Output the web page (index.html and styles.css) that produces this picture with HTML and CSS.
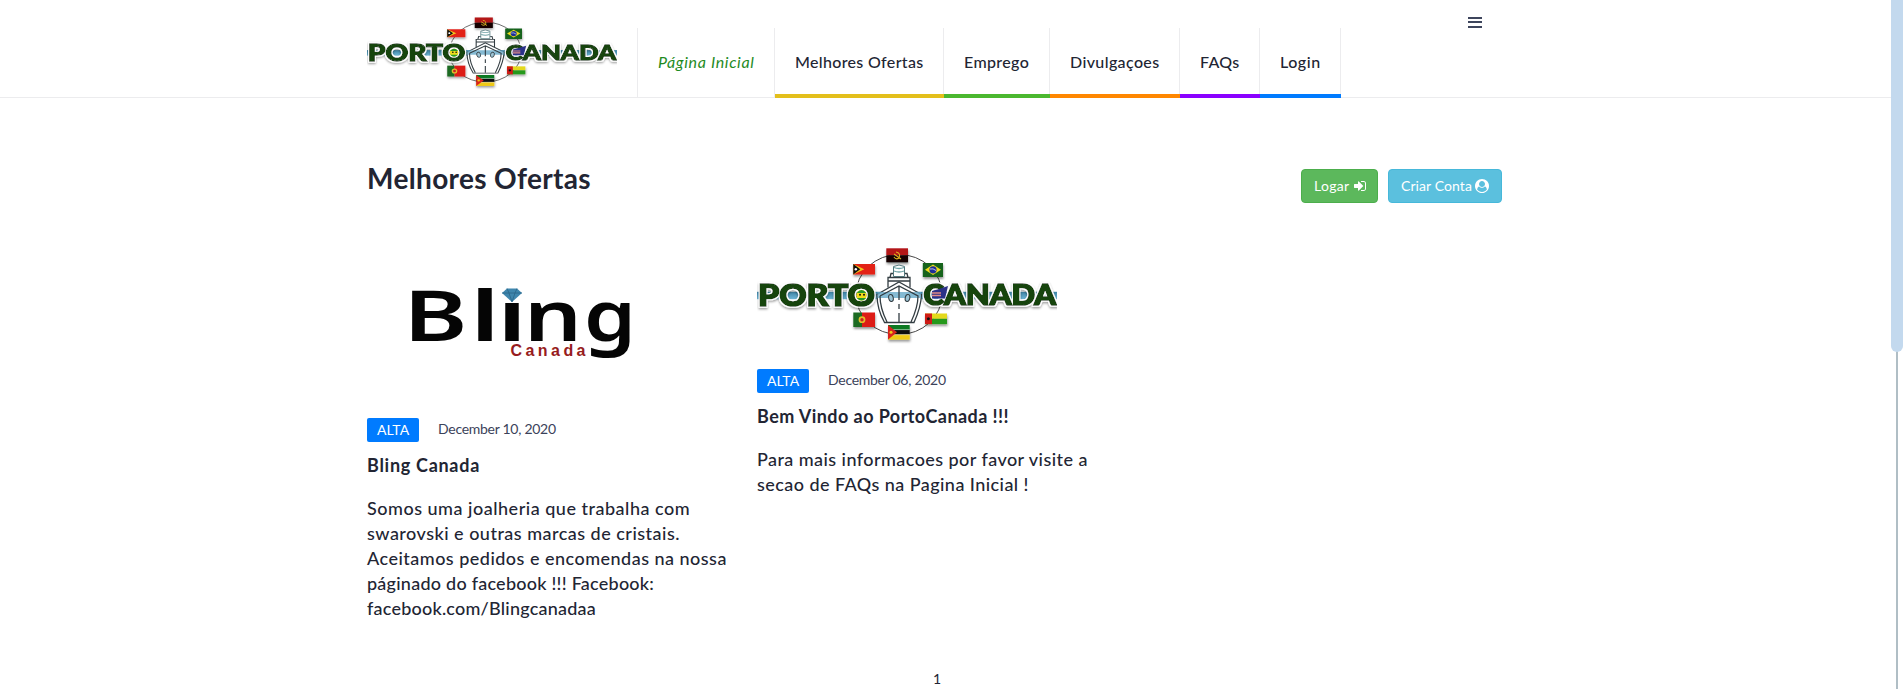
FILE: index.html
```
<!DOCTYPE html>
<html lang="pt">
<head>
<meta charset="utf-8">
<title>PortoCanada</title>
<link rel="stylesheet" href="styles.css">
</head>
<body>
<svg class="defs" width="0" height="0" aria-hidden="true">
  <defs>
    <linearGradient id="sea" x1="0" y1="0" x2="0" y2="1"><stop offset="0" stop-color="#3d84a6"/><stop offset="1" stop-color="#6fb6d6"/></linearGradient>
    <filter id="shade" x="-20%" y="-20%" width="150%" height="160%"><feDropShadow dx="0.5" dy="2" stdDeviation="1.3" flood-color="#000" flood-opacity="0.4"/></filter>
    <filter id="halo" x="-20%" y="-20%" width="150%" height="160%">
      <feMorphology in="SourceAlpha" operator="dilate" radius="1" result="fat"/>
      <feFlood flood-color="#fff"/><feComposite in2="fat" operator="in" result="edge"/>
      <feMerge result="word"><feMergeNode in="edge"/><feMergeNode in="SourceGraphic"/></feMerge>
      <feDropShadow in="word" dx="0" dy="1.500" stdDeviation="1.200" flood-color="#000" flood-opacity="0.400"/>
    </filter>
  </defs>
  <symbol id="porto-logo" viewBox="0 0 300 100" preserveAspectRatio="none">
    <rect x="0" y="46.8" width="300" height="7.4" fill="url(#sea)"/>
    <ellipse cx="142" cy="49.5" rx="43" ry="40" fill="none" stroke="#333" stroke-width="0.9"/>
    <g filter="url(#shade)">
      <g><path d="M129.3 3.3h21.7v7h-21.7z" fill="#b31217"/><path d="M129.3 10.3h21.7v7h-21.7z" fill="#120506"/><path d="M139 7q5 1 3 6q-3 2-5-1M137 9l7 5" fill="none" stroke="#e0b020" stroke-width="1.1"/></g>
      <g><path d="M96.3 19h21.7v10.500h-21.700z" fill="#e32119"/><path d="M96.300 19l11 5.200l-11 5.300z" fill="#f2c21b"/><path d="M96.300 19l7 5.200l-7 5.300z" fill="#111"/><circle cx="98.800" cy="24.200" r="1.200" fill="#fff"/></g>
      <g><path d="M165.800 18h20.200v14h-20.200z" fill="#17631f"/><path d="M176 19.500l8 5.300l-8 5.300l-8-5.300z" fill="#efdc1c"/><circle cx="176" cy="24.800" r="3.600" fill="#1d2f98"/><path d="M173 24q3-1 6 1.500" stroke="#fff" stroke-width="0.7" fill="none"/></g>
      <g><path d="M96.300 67.500h8.700v14.500h-8.700z" fill="#1b6a20"/><path d="M105 67.500h13v14.500h-13z" fill="#dd1a16"/><circle cx="105" cy="74.700" r="3.400" fill="#e3bd2a"/><circle cx="105" cy="74.700" r="1.700" fill="#c92020"/></g>
      <g><path d="M168 68.500h22v5.300h-22z" fill="#e4d91c"/><path d="M168 73.800h22v5.300h-22z" fill="#28991f"/><path d="M168 68.500h7v10.600h-7z" fill="#cf1a17"/><circle cx="171.400" cy="73.800" r="1.500" fill="#111"/></g>
      <g><path d="M131 80h21.700v5h-21.700z" fill="#0c7a24"/><path d="M131 85h21.700v4.600h-21.700z" fill="#111"/><path d="M131 89.600h21.700v5h-21.700z" fill="#efc916"/><path d="M131 84.600h21.700M131 89.700h21.700" stroke="#fff" stroke-width="0.500"/><path d="M131 80l9 7.300l-9 7.300z" fill="#d9231c"/><circle cx="134" cy="87.300" r="1.500" fill="#efc916"/></g>
    </g>
    <path d="M120 49.500L142 37l22.500 12.500Q164 62 157 77.500h-29.500Q120 64 120 49.500z" fill="#fff" stroke="#333d42" stroke-width="1.300"/>
    <path d="M120.500 47h43.500v6h-43.500z" fill="#66a9c8" opacity="0.800"/>
    <path d="M123 51L142 41l19 10Q161 62 154 77M123 51Q123 63 130 77M142 41v14M142 59v5M142 68v9M131 42.500v-10h22v10M133 32.500l1-4h16l1 4M131 36h22" fill="none" stroke="#333d42" stroke-width="1.300"/>
    <path d="M136.500 21.500q5.500-3 11 0v10h-11z" fill="#fff" stroke="#52777c" stroke-width="1"/>
    <path d="M137 22.500q5 2 10 0M137 26q5 2 10 0" fill="none" stroke="#6fa3a6" stroke-width="1.300"/>
    <ellipse cx="134" cy="53" rx="2.300" ry="3.500" fill="#9cc4d6" stroke="#333d42" transform="rotate(-12 134 53)"/><ellipse cx="150.500" cy="53" rx="2.300" ry="3.500" fill="#9cc4d6" stroke="#333d42" transform="rotate(12 150.500 53)"/>
    <g class="logo-word" filter="url(#halo)">
      <text x="1" y="61" font-size="30" textLength="117" lengthAdjust="spacingAndGlyphs">PORTO</text>
      <text x="166.500" y="60" font-size="28.500" textLength="132.500" lengthAdjust="spacingAndGlyphs">CANADA</text>
    </g>
    <circle cx="104.500" cy="50.200" r="5.200" fill="#efdc1c"/><path d="M99.800 48q4.700-6 9.400 0z" fill="#269a2b"/><path d="M99.800 53q4.700 5 9.400 0z" fill="#269a2b"/><circle cx="103" cy="49.800" r="1" fill="#111"/><circle cx="107" cy="49.800" r="1" fill="#111"/>
    <path d="M175 46l7-2l9-3l-3 12.500h-13z" fill="#2b3188"/><path d="M175 48h9M175 50.500h9" stroke="#e08a86" stroke-width="1.500"/>
  </symbol>
</svg>

<header class="header">
  <div class="container header-row">
    <a class="brand"><svg width="250" height="75" preserveAspectRatio="none" viewBox="0 0 300 100"><use href="#porto-logo" width="300" height="100"/></svg></a>
    <nav class="nav">
      <a class="nav-item home">Página Inicial</a>
      <a class="nav-item gold">Melhores Ofertas</a>
      <a class="nav-item green">Emprego</a>
      <a class="nav-item orange">Divulgaçoes</a>
      <a class="nav-item purple">FAQs</a>
      <a class="nav-item blue">Login</a>
    </nav>
    <button class="burger" aria-label="Menu"><svg width="14" height="11"><path d="M0 0h14v2H0zM0 4h14v2H0zM0 9h14v2H0z" fill="#3d455c"/></svg></button>
  </div>
</header>

<main class="container">
  <div class="title-row">
    <h2 class="title">Melhores Ofertas</h2>
    <div class="actions">
      <a class="btn success"><span class="logar">Logar</span><svg width="14" height="14" viewBox="0 0 1792 1792"><path fill="#fff" d="M1312 896q0 26-19 45l-544 544q-19 19-45 19t-45-19-19-45v-288h-448q-26 0-45-19t-19-45v-384q0-26 19-45t45-19h448v-288q0-26 19-45t45-19 45 19l544 544q19 19 19 45zm352-352v704q0 119-84.500 203.500t-203.500 84.500h-320q-13 0-22.500-9.500t-9.500-22.500q0-4-1-20t-.5-26.500 3-23.500 10-19.500 20.500-6.500h320q66 0 113-47t47-113v-704q0-66-47-113t-113-47h-312l-11.500-1-11.500-3-8-5.500-7-9-2-13.500q0-4-1-20t-.5-26.500 3-23.500 10-19.500 20.500-6.500h320q119 0 203.500 84.500t84.500 203.500z"/></svg></a>
      <a class="btn info"><span class="criar">Criar Conta</span><svg width="14" height="14" viewBox="0 0 1792 1792"><path fill="#fff" fill-rule="evenodd" d="M1523 1339q-22-155-87.500-257.500t-184.500-118.500q-67 74-159.500 115.500t-195.500 41.500-195.500-41.500-159.500-115.500q-119 16-184.500 118.500t-87.500 257.500q106 150 271 237.500t356 87.500 356-87.500 271-237.500zm-243-699q0-159-112.500-271.500t-271.500-112.500-271.500 112.500-112.500 271.500 112.500 271.500 271.500 112.500 271.500-112.500 112.500-271.500zm512 256q0 182-71 347.500t-190.500 286-285.500 191.500-349 71q-182 0-348-71t-286-191-191-286-71-348 71-348 191-286 286-191 348-71 348 71 286 191 191 286 71 348z"/></svg></a>
    </div>
  </div>

  <div class="grid">
    <article class="card">
      <svg class="picture" width="300" height="149" viewBox="0 0 300 149">
        <g class="bling">
          <text x="36.500" y="94" textLength="64" lengthAdjust="spacingAndGlyphs">B</text>
          <text x="103" y="94" textLength="30" lengthAdjust="spacingAndGlyphs">l</text>
          <text x="130" y="94" textLength="30" lengthAdjust="spacingAndGlyphs">i</text>
          <text x="157" y="94" textLength="58" lengthAdjust="spacingAndGlyphs">n</text>
          <text x="217" y="94" textLength="52" lengthAdjust="spacingAndGlyphs">g</text>
        </g>
        <rect x="133" y="36" width="26" height="20" fill="#fff"/>
        <path d="M135 46l5-4.500h10l5 4.500l-10 9z" fill="#3f86ad"/><path d="M135 46h20M140 41.500l2 4.500l3 9l3-9l2-4.500" stroke="#2b6688" stroke-width="0.800" fill="none"/>
        <text class="bling-sub" x="143.500" y="108.500" textLength="75">Canada</text>
      </svg>
      <div class="meta"><span class="badge">ALTA</span><span class="date">December 10, 2020</span></div>
      <h3 class="card-title t1">Bling Canada</h3>
      <p class="text"><span class="l1">Somos uma joalheria que trabalha com</span><br><span class="l2">swarovski e outras marcas de cristais.</span><br><span class="l3">Aceitamos pedidos e encomendas na nossa</span><br><span class="l4">páginado do facebook !!! Facebook:</span><br><span class="l5">facebook.com/Blingcanadaa</span></p>
    </article>
    <article class="card">
      <svg class="picture" width="300" height="100"><use href="#porto-logo" width="300" height="100"/></svg>
      <div class="meta"><span class="badge">ALTA</span><span class="date">December 06, 2020</span></div>
      <h3 class="card-title t2">Bem Vindo ao PortoCanada !!!</h3>
      <p class="text"><span class="l6">Para mais informacoes por favor visite a</span><br><span class="l7">secao de FAQs na Pagina Inicial !</span></p>
    </article>
  </div>
  <div class="pager">1</div>
</main>
<div class="rail"><div class="thumb"></div></div>
</body>
</html>
```
FILE: styles.css
```
* { box-sizing: border-box; }
html, body { height: 100%; overflow: hidden; }
body { margin: 0; background: #fff; color: #222533; font-family: Lato, "Open Sans", sans-serif; font-size: 16px; }
.defs { position: absolute; }
.container { width: 1170px; margin-left: 352px; padding: 0 15px; }

.header { height: 98px; border-bottom: 1px solid #ececee; }
.header-row { display: flex; align-items: flex-start; }
.brand { display: block; width: 270px; padding-top: 15px; }
.brand svg { display: block; }
.nav { display: flex; margin-top: 28px; border-left: 1px solid #ececee; }
.nav-item { height: 70px; padding-left: 20px; line-height: 68px; font-weight: 500; white-space: nowrap; box-shadow: inset -1px 0 #ececee; border-bottom: 4px solid var(--bar); }
.home { width: 137px; height: 69px; border-bottom: 0; color: #1f8b1f; font-style: italic; font-weight: 400; letter-spacing: .65px; }
.gold { width: 169px; --bar: #e3bf1b; letter-spacing: .33px; }
.green { width: 106px; --bar: #4bb82f; letter-spacing: .36px; }
.orange { width: 130px; --bar: #ff8700; letter-spacing: .38px; }
.purple { width: 80px; --bar: #8a00ff; letter-spacing: .3px; }
.blue { width: 81px; --bar: #007bff; letter-spacing: .55px; }
.burger { margin: 17px 0 0 127px; padding: 0; border: 0; background: none; }
.burger svg { display: block; }

.title-row { display: flex; justify-content: space-between; padding: 61px 5px 0 0; height: 149px; }
.title { margin: 0; font-size: 28px; line-height: 38px; font-weight: 700; letter-spacing: .35px; }
.actions { display: flex; gap: 10px; padding-top: 10px; }
.btn { display: flex; align-items: center; height: 34px; padding: 0 12px; border: 1px solid; border-radius: 4px; color: #fff; font-size: 14px; font-weight: 400; white-space: nowrap; }
.btn svg { margin: 0 0 1px 2px; flex: none; }
.success { width: 77px; background: #5cb85c; border-color: #4cae4c; }
.info { width: 114px; background: #5bc0de; border-color: #46b8da; }
.logar { width: 37px; letter-spacing: .3px; }
.criar { width: 72px; letter-spacing: .1px; }
.btn span { flex: none; padding-bottom: 2px; }

.grid { display: grid; grid-template-columns: 390px 390px; height: 419px; align-items: start; }
.picture { display: block; }
.card:last-child .picture { margin-top: -2px; }
.meta { display: flex; align-items: center; margin-top: 22px; }
.card:last-child .meta { margin-top: 24px; }
.badge { width: 52px; height: 24px; padding-left: 10px; border-radius: 2px; background: #007bff; color: #fff; font-size: 14px; line-height: 23px; }
.date { margin-left: 19px; padding-bottom: 2px; color: #3b425a; font-size: 14px; line-height: 22px; letter-spacing: -.28px; }
.card-title { margin: 10px 0 0; font-size: 18px; line-height: 27px; font-weight: 700; white-space: nowrap; }
.text { margin: 17px 0 0; font-size: 18px; line-height: 25px; font-weight: 500; white-space: nowrap; }
.t1 { letter-spacing: .71px; }
.t2 { letter-spacing: .43px; }
.l1 { letter-spacing: .51px; }
.l2 { letter-spacing: .48px; }
.l3 { letter-spacing: .48px; }
.l4 { letter-spacing: .24px; }
.l5 { letter-spacing: .22px; }
.l6 { letter-spacing: .44px; }
.l7 { letter-spacing: .44px; }
.pager { text-align: center; font-size: 14px; line-height: 25px; }

.logo-word text { font-family: Lato, sans-serif; font-weight: 900; fill: #14440f; stroke: #14440f; stroke-width: 1.7px; }
.bling text { font-family: "Noto Sans", sans-serif; font-weight: 600; font-size: 70px; fill: #050505; }
.bling-sub { font-family: "Liberation Sans", sans-serif; font-weight: 700; font-size: 16px; fill: #971c20; }

.rail { position: fixed; top: 0; right: 0; width: 12px; height: 100%; background: linear-gradient(#b0bec5, #b0bec5) 5px 0 / 2px 100% no-repeat #fff; }
.thumb { height: 352px; background: #c3d9ee; border-radius: 0 0 6px 6px; }
```
